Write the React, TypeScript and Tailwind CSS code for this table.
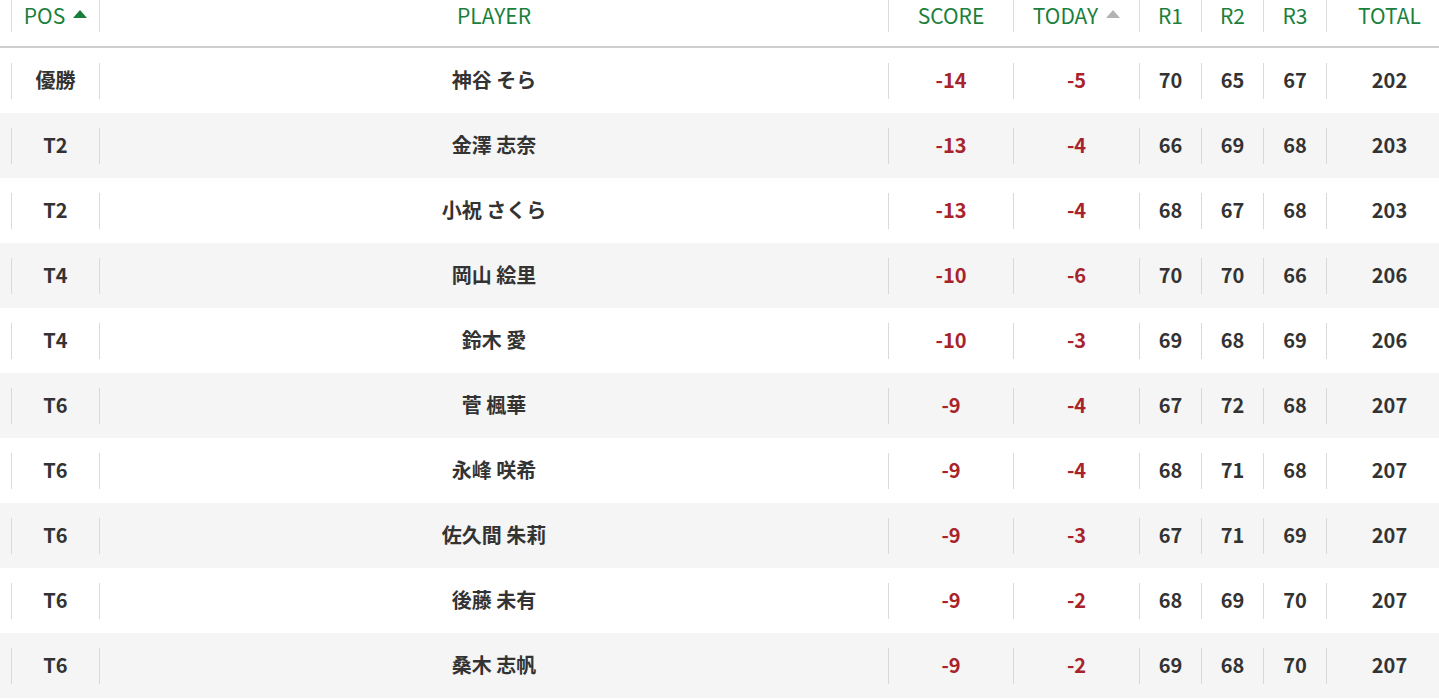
type Row = {
  pos: string;
  name: string;
  score: string;
  today: string;
  r1: number;
  r2: number;
  r3: number;
  total: number;
};

const rows: Row[] = [
  { pos: "優勝", name: "神谷 そら", score: "-14", today: "-5", r1: 70, r2: 65, r3: 67, total: 202 },
  { pos: "T2", name: "金澤 志奈", score: "-13", today: "-4", r1: 66, r2: 69, r3: 68, total: 203 },
  { pos: "T2", name: "小祝 さくら", score: "-13", today: "-4", r1: 68, r2: 67, r3: 68, total: 203 },
  { pos: "T4", name: "岡山 絵里", score: "-10", today: "-6", r1: 70, r2: 70, r3: 66, total: 206 },
  { pos: "T4", name: "鈴木 愛", score: "-10", today: "-3", r1: 69, r2: 68, r3: 69, total: 206 },
  { pos: "T6", name: "菅 楓華", score: "-9", today: "-4", r1: 67, r2: 72, r3: 68, total: 207 },
  { pos: "T6", name: "永峰 咲希", score: "-9", today: "-4", r1: 68, r2: 71, r3: 68, total: 207 },
  { pos: "T6", name: "佐久間 朱莉", score: "-9", today: "-3", r1: 67, r2: 71, r3: 69, total: 207 },
  { pos: "T6", name: "後藤 未有", score: "-9", today: "-2", r1: 68, r2: 69, r3: 70, total: 207 },
  { pos: "T6", name: "桑木 志帆", score: "-9", today: "-2", r1: 69, r2: 68, r3: 70, total: 207 },
];

const widths = ["w-[88px]", "w-[789px]", "w-[125px]", "w-[126px]", "w-[62px]", "w-[62px]", "w-[63px]", "w-[126px]"];

function Arrow({ color }: { color: string }) {
  return (
    <svg width="14" height="8" viewBox="0 0 14 8" className="ml-2 mb-[4px]">
      <path d="M0 8 L7 0 L14 8 Z" fill={color} />
    </svg>
  );
}

function Cell({ w, children }: { w: string; children: React.ReactNode }) {
  return (
    <div className={`${w} shrink-0 flex items-center`}>
      <div className="w-px h-9 bg-[#d9d9d9]" />
      <div className="flex-1 flex items-center justify-center pb-[2px]">{children}</div>
    </div>
  );
}

export default function App() {
  const headers = ["POS", "PLAYER", "SCORE", "TODAY", "R1", "R2", "R3", "TOTAL"];

  return (
    <div
      className="w-full overflow-hidden bg-white text-[#333]"
      style={{ fontFamily: '"Noto Sans CJK JP", "Noto Sans", sans-serif' }}
    >
      {/* header */}
      <div className="h-[46px] flex pl-[11px] border-b-2 border-[#cfcfcf] box-content">
        {headers.map((h, i) => (
          <div key={h} className={`${widths[i]} shrink-0 flex items-start`}>
            <div className={`${widths[i]} shrink-0 flex items-center h-8`}>
              <div className="w-px h-8 bg-[#dcdcdc]" />
              <div className="flex-1 flex items-center justify-center text-[21px] text-[#1a7f3c]">
                {h}
                {h === "POS" && <Arrow color="#1a7f3c" />}
                {h === "TODAY" && <Arrow color="#b3b3b3" />}
              </div>
            </div>
          </div>
        ))}
      </div>

      {rows.map((r, idx) => (
        <div
          key={idx}
          className={`h-[65px] flex items-center pl-[11px] font-bold text-[20px] ${
            idx % 2 === 1 ? "bg-[#f5f5f5]" : "bg-white"
          }`}
        >
          <Cell w={widths[0]}>{r.pos}</Cell>
          <Cell w={widths[1]}>{r.name}</Cell>
          <Cell w={widths[2]}>
            <span className="text-[#a8232b]">{r.score}</span>
          </Cell>
          <Cell w={widths[3]}>
            <span className="text-[#a8232b]">{r.today}</span>
          </Cell>
          <Cell w={widths[4]}>{r.r1}</Cell>
          <Cell w={widths[5]}>{r.r2}</Cell>
          <Cell w={widths[6]}>{r.r3}</Cell>
          <Cell w={widths[7]}>{r.total}</Cell>
        </div>
      ))}
    </div>
  );
}
